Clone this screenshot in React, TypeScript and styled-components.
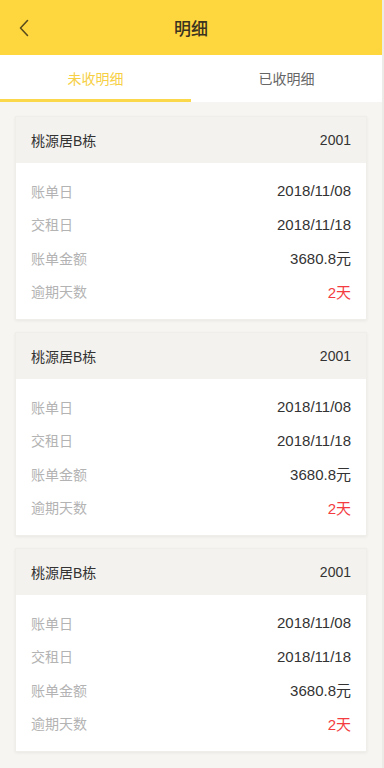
import React, { useState } from 'react';
import styled, { createGlobalStyle } from 'styled-components';

const GlobalStyle = createGlobalStyle`
  html, body {
    margin: 0;
    padding: 0;
    background: #f6f5f1;
  }
  body {
    font-family: "Liberation Sans", "Noto Sans CJK SC", sans-serif;
  }
`;

const Page = styled.div`
  width: 384px;
  min-height: 768px;
  background: #f6f5f1;
  box-sizing: border-box;
  border-right: 2px solid #ecebe7;
`;

const TopBar = styled.header`
  height: 55px;
  background: #fed73f;
  display: grid;
  grid-template-columns: 56px 1fr 56px;
  align-items: center;
`;

const BackButton = styled.button`
  background: none;
  border: none;
  padding: 0 0 0 19px;
  height: 55px;
  display: flex;
  align-items: center;
  cursor: pointer;
`;

const Title = styled.h1`
  margin: 0;
  text-align: center;
  font-size: 17px;
  font-weight: 500;
  color: #3a3320;
`;

const Tabs = styled.nav`
  height: 47px;
  background: #fff;
  display: flex;
  margin-bottom: 14px;
`;

const Tab = styled.button<{ active: boolean }>`
  flex: 1;
  background: none;
  border: none;
  font-family: inherit;
  font-size: 14px;
  color: ${(p) => (p.active ? '#f6cf45' : '#666')};
  border-bottom: 3px solid ${(p) => (p.active ? '#fbd84a' : 'transparent')};
  padding-top: 3px;
  cursor: pointer;
`;

const List = styled.div`
  display: flex;
  flex-direction: column;
  gap: 12px;
  padding: 0 15px 14px 15px;
`;

const Card = styled.section`
  background: #fff;
  box-shadow: 0 1px 3px rgba(0, 0, 0, 0.06);
  border: 1px solid #efeee9;
`;

const CardHead = styled.div`
  height: 46px;
  background: #f3f2ee;
  display: flex;
  align-items: center;
  justify-content: space-between;
  padding: 0 15px;
  font-size: 14px;
  color: #333;
`;

const CardBody = styled.div`
  padding: 11px 15px;
`;

const Row = styled.div`
  height: 33.5px;
  display: flex;
  align-items: center;
  justify-content: space-between;
  font-size: 14px;
`;

const Label = styled.span`
  color: #b3b3b3;
`;

const Value = styled.span<{ alert?: boolean }>`
  font-size: 15px;
  color: ${(p) => (p.alert ? '#f33b40' : '#333')};
`;

const bills = [
  { name: '桃源居B栋', room: '2001', billDate: '2018/11/08', payDate: '2018/11/18', amount: '3680.8元', overdue: '2天' },
  { name: '桃源居B栋', room: '2001', billDate: '2018/11/08', payDate: '2018/11/18', amount: '3680.8元', overdue: '2天' },
  { name: '桃源居B栋', room: '2001', billDate: '2018/11/08', payDate: '2018/11/18', amount: '3680.8元', overdue: '2天' },
];

export default function App() {
  const [tab, setTab] = useState(0);

  return (
    <>
      <GlobalStyle />
      <Page>
        <TopBar>
          <BackButton aria-label="返回">
            <svg width="10" height="18" viewBox="0 0 10 18">
              <path d="M8.5 1.5 L1.5 9 L8.5 16.5" fill="none" stroke="#5a4c1c" strokeWidth="1.6" strokeLinecap="round" strokeLinejoin="round" />
            </svg>
          </BackButton>
          <Title>明细</Title>
          <span />
        </TopBar>
        <Tabs>
          <Tab active={tab === 0} onClick={() => setTab(0)}>未收明细</Tab>
          <Tab active={tab === 1} onClick={() => setTab(1)}>已收明细</Tab>
        </Tabs>
        <List>
          {bills.map((b, i) => (
            <Card key={i}>
              <CardHead>
                <span>{b.name}</span>
                <span>{b.room}</span>
              </CardHead>
              <CardBody>
                <Row>
                  <Label>账单日</Label>
                  <Value>{b.billDate}</Value>
                </Row>
                <Row>
                  <Label>交租日</Label>
                  <Value>{b.payDate}</Value>
                </Row>
                <Row>
                  <Label>账单金额</Label>
                  <Value>{b.amount}</Value>
                </Row>
                <Row>
                  <Label>逾期天数</Label>
                  <Value alert>{b.overdue}</Value>
                </Row>
              </CardBody>
            </Card>
          ))}
        </List>
      </Page>
    </>
  );
}
